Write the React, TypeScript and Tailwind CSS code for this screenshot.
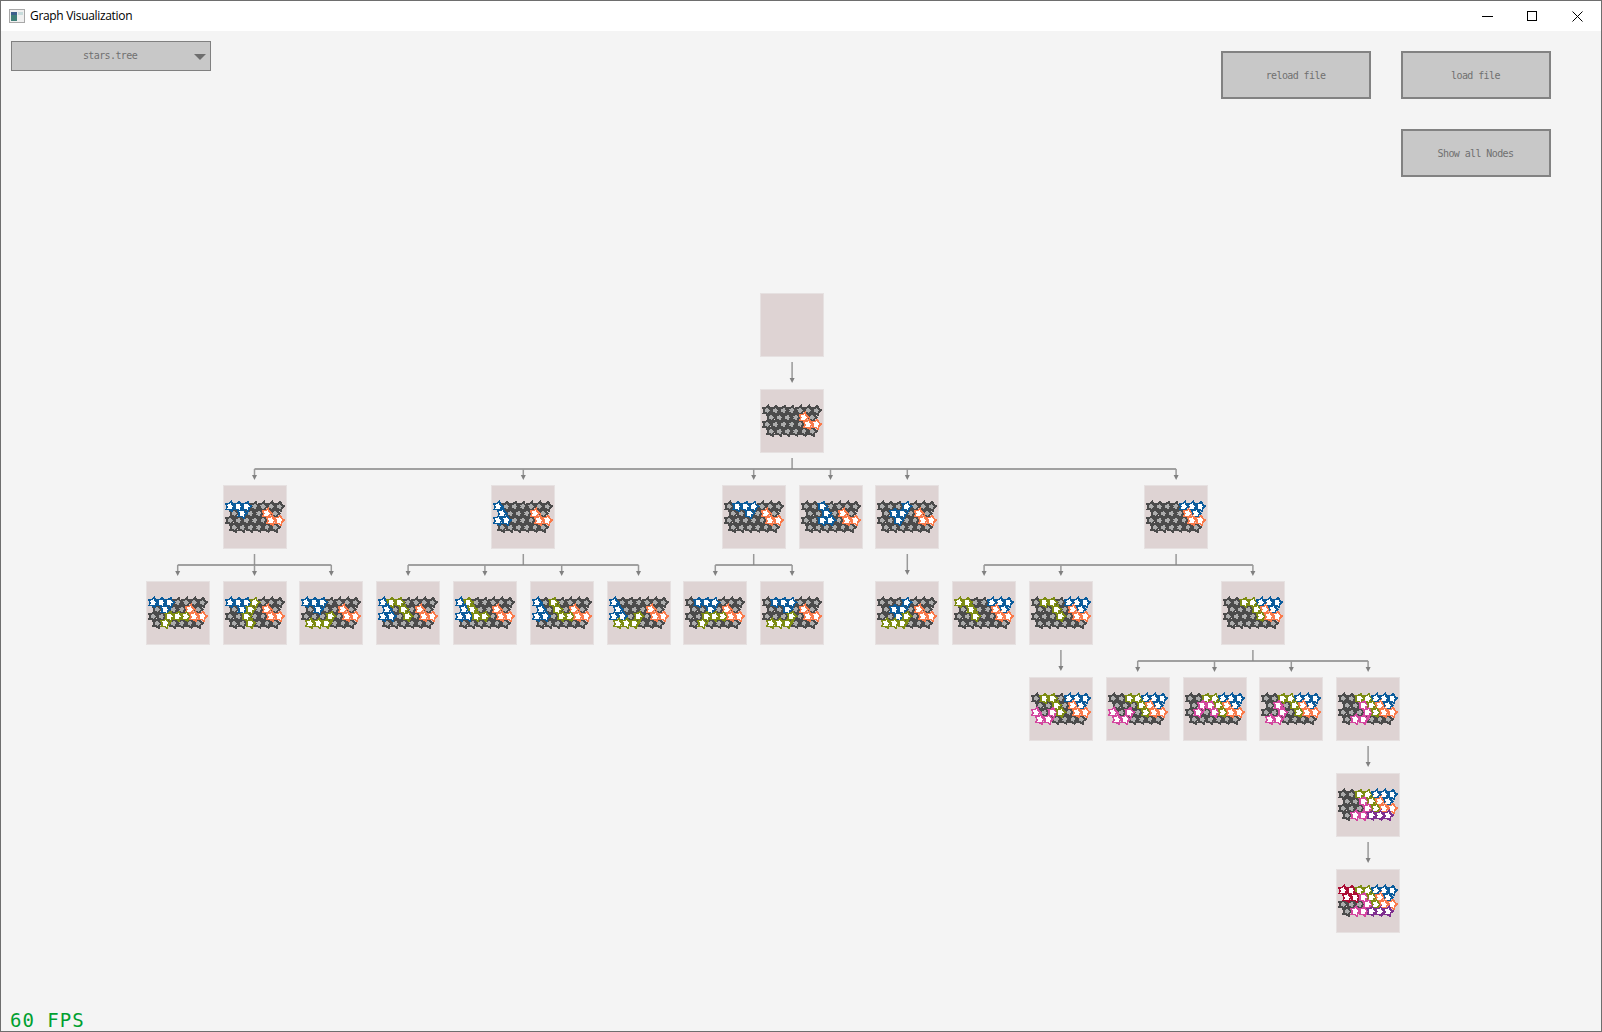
type TreeNode = { col: number; row: number; board: string; kids: TreeNode[] };

const n = (col: number, row: number, board: string, ...kids: TreeNode[]): TreeNode => ({ col, row, board, kids });

const tree = n(8, 0, '',
  n(8, 1, '......./....o./.....oo/......',
    n(1, 2, 'bbb..../.b..o./.....oo/......',
      n(0, 3, 'bbb..../.b..o./..gggoo/.g....'),
      n(1, 3, 'bbbg.../.bg.o./..g..oo/..g...'),
      n(2, 3, 'bbb..../.b..o./...g.oo/ggg...'),
    ),
    n(4.5, 2, 'b....../b...o./bb...oo/......',
      n(3, 3, 'bgg..../b.g.o./bb.g.oo/......'),
      n(4, 3, 'bg...../bg..o./bbgg.oo/......'),
      n(5, 3, 'b.g..../b.g.o./bb.ggoo/......'),
      n(6, 3, 'b....../b...o./bb.g.oo/ggg...'),
    ),
    n(7.5, 2, '.bbb.../..b.o./.....oo/......',
      n(7, 3, '.bbb.../..b.o./..gggoo/.g....'),
      n(8, 3, '.bbb.../..b.o./...g.oo/ggg...'),
    ),
    n(8.5, 2, '..b..../..b.o./..bb.oo/......'),
    n(9.5, 2, '...b.../.bb.o./..b..oo/......',
      n(9.5, 3, '...b.../.bb.o./..bg.oo/ggg...'),
    ),
    n(13, 2, '....bbb/....ob/.....oo/......',
      n(10.5, 3, 'gg..bbb/.g..ob/..g..oo/......'),
      n(11.5, 3, '.gg.bbb/..g.ob/...g.oo/......',
        n(11.5, 4, '.gg.bbb/..g.ob/p.pg.oo/pp....'),
      ),
      n(14, 3, '..ggbbb/...gob/....goo/......',
        n(12.5, 4, '..ggbbb/...gob/p.p.goo/pp....'),
        n(13.5, 4, '..ggbbb/.ppgob/.p.pgoo/......'),
        n(14.5, 4, '..ggbbb/.p.gob/..p.goo/pp....'),
        n(15.5, 4, '..ggbbb/..pgob/...pgoo/.pp...',
          n(15.5, 5, '..ggbbb/..pgob/...pgoo/.ppuuu',
            n(15.5, 6, 'rrggbbb/rrpgob/...pgoo/.ppuuu'),
          ),
        ),
      ),
    ),
  ),
);

const flatten = (t: TreeNode): TreeNode[] => [t, ...t.kids.flatMap(flatten)];
const allNodes = flatten(tree);

const NODE = 64;
const nodeX = (col: number) => 144.7 + 76.8 * col;
const nodeY = (row: number) => 8 + 96 * row;

const colors: Record<string, string> = {
  b: '#0b5c9c',
  o: '#fa7a4a',
  g: '#7d8c12',
  p: '#d4479f',
  r: '#ab0e35',
  u: '#7f2f8f',
};

function starPoints(cx: number, cy: number, outer: number, inner: number, tilt: number) {
  const pts: string[] = [];
  for (let i = 0; i < 10; i++) {
    const a = ((tilt + i * 36) * Math.PI) / 180;
    const r = i % 2 === 0 ? outer : inner;
    pts.push(`${(cx + r * Math.cos(a)).toFixed(1)},${(cy + r * Math.sin(a)).toFixed(1)}`);
  }
  return pts.join(' ');
}

function Board({ board }: { board: string }) {
  const cells: { x: number; y: number; c: string }[] = [];
  board.split('/').forEach((line, r) => {
    [...line].forEach((c, i) => {
      cells.push({ x: (r % 2 === 0 ? 7 : 11) + 8.2 * i, y: 21.5 + 6.95 * r, c });
    });
  });
  const sorted = [...cells].sort((a, b) => Number(a.c !== '.') - Number(b.c !== '.'));
  return (
    <svg width={NODE} height={NODE} shapeRendering="crispEdges" className="block">
      {sorted.map((s, i) => (
        <polygon key={i} points={starPoints(s.x, s.y, 6.4, 4, -75)} fill={s.c === '.' ? '#4b4b4b' : colors[s.c]} />
      ))}
      {sorted.map((s, i) =>
        s.c === '.' ? (
          <polygon key={i} points={starPoints(s.x, s.y, 3, 2, -75)} fill="#adadad" />
        ) : (
          <polygon key={i} points={starPoints(s.x, s.y, 3.5, 2.2, -75)} fill="#ffffff" />
        ),
      )}
    </svg>
  );
}

function Arrow({ x, y1, y2 }: { x: number; y1: number; y2: number }) {
  return (
    <g>
      <line x1={x} y1={y1} x2={x} y2={y2 - 4} stroke="#999999" strokeWidth={1.5} />
      <polygon points={`${x - 2.5},${y2 - 5} ${x + 2.5},${y2 - 5} ${x},${y2}`} fill="#808080" />
    </g>
  );
}

function Edges() {
  const parents = allNodes.filter((p) => p.kids.length > 0);
  return (
    <svg width={1600} height={660} className="absolute left-0 top-0">
      {parents.map((p, i) => {
        const cx = nodeX(p.col) + NODE / 2;
        const bottom = nodeY(p.row) + NODE;
        if (p.kids.length === 1) {
          return <Arrow key={i} x={cx} y1={bottom + 5} y2={nodeY(p.row + 1) - 6} />;
        }
        const xs = p.kids.map((k) => nodeX(k.col) + NODE / 2);
        const bus = bottom + 16;
        return (
          <g key={i}>
            <line x1={cx} y1={bottom + 5} x2={cx} y2={bus} stroke="#999999" strokeWidth={1.5} />
            <line x1={Math.min(...xs)} y1={bus} x2={Math.max(...xs)} y2={bus} stroke="#858585" strokeWidth={1.5} />
            {xs.map((x, j) => (
              <Arrow key={j} x={x} y1={bus} y2={bus + 11} />
            ))}
          </g>
        );
      })}
    </svg>
  );
}

function GameButton({ label }: { label: string }) {
  return (
    <button className="flex h-[48px] w-[150px] items-center justify-center border-2 border-[#828282] bg-[#c8c8c8] pr-[1px] font-['DejaVu_Sans_Mono',monospace] text-[10px] tracking-[-0.6px] text-[#707070]">
      {label}
    </button>
  );
}

export default function App() {
  return (
    <div className="flex h-[1032px] w-[1602px] flex-col overflow-hidden border border-[#6e6e6e] bg-[#f4f4f4]">
      {/* title bar */}
      <div className="flex h-[30px] shrink-0 items-center bg-white font-['Open_Sans',sans-serif] text-[12px] text-black">
        <svg width="16" height="14" viewBox="0 0 16 14" className="ml-[8px] mr-[5px]">
          <rect x="0.5" y="0.5" width="15" height="13" fill="#f0f0f0" stroke="#a8a8a8" />
          <rect x="2" y="3" width="6" height="9" fill="#3f7f78" />
          <rect x="2" y="3" width="6" height="3" fill="#3c5f8c" />
          <rect x="9" y="3" width="5" height="3" fill="#c8dcdc" />
        </svg>
        <span className="tracking-[-0.32px]">Graph Visualization</span>
        <div className="ml-auto flex items-center pr-[18px]">
          <span className="mr-[34px] block h-px w-[11px] bg-black" />
          <span className="mr-[35px] block h-[10px] w-[10px] border border-black" />
          <svg width="11" height="11" viewBox="0 0 11 11">
            <path d="M0.5 0.5 L10.5 10.5 M10.5 0.5 L0.5 10.5" stroke="#000000" strokeWidth="1" fill="none" />
          </svg>
        </div>
      </div>

      {/* controls */}
      <div className="flex h-[254px] shrink-0 items-start justify-between pl-[10px] pr-[50px] pt-[10px]">
        <div className="relative flex h-[30px] w-[200px] items-center justify-center border border-[#808080] bg-[#c8c8c8] pb-[1px] pr-[2px] font-['DejaVu_Sans_Mono',monospace] text-[10px] tracking-[-0.6px] text-[#707070]">
          stars.tree
          <span className="absolute right-[4px] top-[12px] h-0 w-0 border-x-[6px] border-t-[6px] border-x-transparent border-t-[#6e6e6e]" />
        </div>
        <div className="grid grid-cols-2 gap-x-[30px] gap-y-[30px] pt-[10px]">
          <GameButton label="reload file" />
          <GameButton label="load file" />
          <div />
          <GameButton label="Show all Nodes" />
        </div>
      </div>

      {/* graph */}
      <div className="relative flex-1">
        <Edges />
        {allNodes.map((node, i) => (
          <div
            key={i}
            className="absolute h-[64px] w-[64px] bg-[#ded3d3] outline outline-1 -outline-offset-1 outline-[#e6e1e1]"
            style={{ left: nodeX(node.col), top: nodeY(node.row) }}
          >
            {node.board && <Board board={node.board} />}
          </div>
        ))}
        <div className="absolute bottom-0 left-[9px] font-['DejaVu_Sans_Mono',monospace] text-[19px] leading-[22px] tracking-[1px] text-[#00a030]">
          60 FPS
        </div>
      </div>
    </div>
  );
}
